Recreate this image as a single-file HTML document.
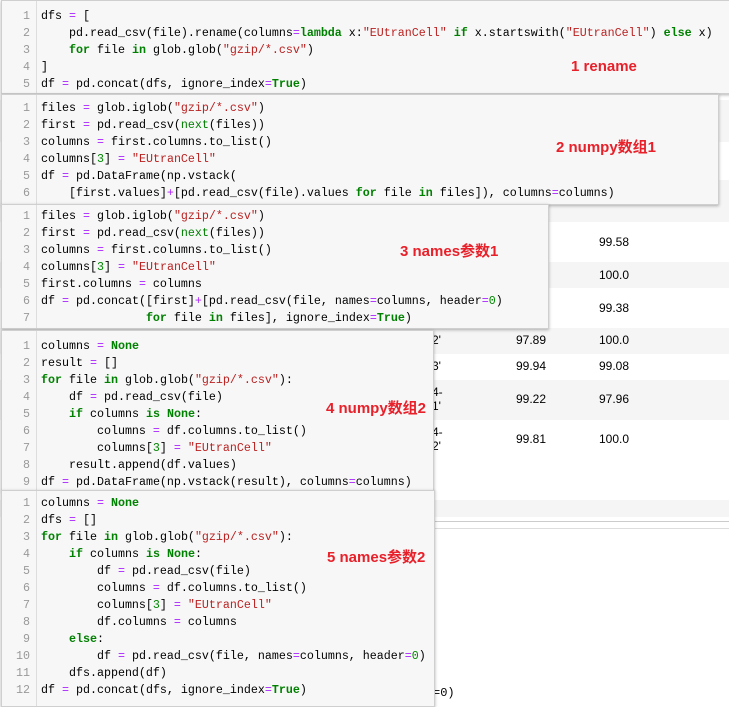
<!DOCTYPE html>
<html><head><meta charset="utf-8"><style>
body{margin:0;width:729px;height:700px;overflow:hidden;background:#fff;position:relative;font-family:"Liberation Mono",monospace;}
.band{position:absolute;left:0;right:0;background:#f5f5f5}
.num{position:absolute;font:12px "Liberation Sans",sans-serif;color:#000}
.cell{position:absolute;left:1px;background:#f7f7f7;border:1px solid #cfcfcf;box-shadow:0 1px 3px rgba(0,0,0,.3);overflow:hidden}
.cell .g{position:absolute;left:0;top:0;bottom:0;width:34px;border-right:1px solid #ddd}
.cell pre{margin:0;position:absolute;left:39px;font:11.67px/17px "Liberation Mono",monospace;color:#000;white-space:pre}
.cell .ln{position:absolute;left:0;width:28px;text-align:right;font:11.67px/17px "Liberation Mono",monospace;color:#999;white-space:pre}
.k{color:#008000;font-weight:bold}.o{color:#aa22ff}.s{color:#ba2121}.n{color:#080}.b{color:#008000}
.lab{position:absolute;color:#e8202a;font:bold 15px "Liberation Sans","Noto Sans CJK SC",sans-serif;white-space:nowrap}
</style></head><body>
<div class="band" style="top:100px;height:42px"></div>
<div class="band" style="top:180px;height:42px"></div>
<div class="band" style="top:262px;height:26px"></div>
<div class="band" style="top:328px;height:26px"></div>
<div class="band" style="top:380px;height:40px"></div>
<div class="band" style="top:500px;height:17px"></div>
<div style="position:absolute;left:433px;right:0;top:521px;height:1px;background:#ccc"></div>
<div style="position:absolute;left:433px;right:0;top:528px;height:1px;background:#ddd"></div>
<div class="num" style="left:599px;top:235px">99.58</div>
<div class="num" style="left:599px;top:268px">100.0</div>
<div class="num" style="left:599px;top:301px">99.38</div>
<div class="num" style="left:432px;top:333px">2'</div><div class="num" style="left:516px;top:333px">97.89</div><div class="num" style="left:599px;top:333px">100.0</div>
<div class="num" style="left:432px;top:359px">3'</div><div class="num" style="left:516px;top:359px">99.94</div><div class="num" style="left:599px;top:359px">99.08</div>
<div class="num" style="left:432px;top:385px;line-height:14px">4-<br>1'</div><div class="num" style="left:516px;top:392px">99.22</div><div class="num" style="left:599px;top:392px">97.96</div>
<div class="num" style="left:432px;top:425px;line-height:14px">4-<br>2'</div><div class="num" style="left:516px;top:432px">99.81</div><div class="num" style="left:599px;top:432px">100.0</div>
<div class="num" style="left:433px;top:686px;font-family:'Liberation Mono'">=0)</div>

<div class="cell" style="top:0;width:740px;height:92px"><div class="g"></div>
<div class="ln" style="top:7px">1
2
3
4
5</div>
<pre style="top:7px">dfs <span class="o">=</span> [
    pd.read_csv(file).rename(columns<span class="o">=</span><span class="k">lambda</span> x:<span class="s">"EUtranCell"</span> <span class="k">if</span> x.startswith(<span class="s">"EUtranCell"</span>) <span class="k">else</span> x)
    <span class="k">for</span> file <span class="k">in</span> glob.glob(<span class="s">"gzip/*.csv"</span>)
]
df <span class="o">=</span> pd.concat(dfs, ignore_index<span class="o">=</span><span class="k">True</span>)</pre></div>
<div class="lab" style="left:571px;top:58px">1 rename</div>

<div class="cell" style="top:94px;width:716px;height:109px"><div class="g"></div>
<div class="ln" style="top:5px">1
2
3
4
5
6</div>
<pre style="top:5px">files <span class="o">=</span> glob.iglob(<span class="s">"gzip/*.csv"</span>)
first <span class="o">=</span> pd.read_csv(<span class="b">next</span>(files))
columns <span class="o">=</span> first.columns.to_list()
columns[<span class="n">3</span>] <span class="o">=</span> <span class="s">"EUtranCell"</span>
df <span class="o">=</span> pd.DataFrame(np.vstack(
    [first.values]<span class="o">+</span>[pd.read_csv(file).values <span class="k">for</span> file <span class="k">in</span> files]), columns<span class="o">=</span>columns)</pre></div>
<div class="lab" style="left:556px;top:136px">2 numpy数组1</div>

<div class="cell" style="top:204px;width:546px;height:123px"><div class="g"></div>
<div class="ln" style="top:3px">1
2
3
4
5
6
7</div>
<pre style="top:3px">files <span class="o">=</span> glob.iglob(<span class="s">"gzip/*.csv"</span>)
first <span class="o">=</span> pd.read_csv(<span class="b">next</span>(files))
columns <span class="o">=</span> first.columns.to_list()
columns[<span class="n">3</span>] <span class="o">=</span> <span class="s">"EUtranCell"</span>
first.columns <span class="o">=</span> columns
df <span class="o">=</span> pd.concat([first]<span class="o">+</span>[pd.read_csv(file, names<span class="o">=</span>columns, header<span class="o">=</span><span class="n">0</span>)
               <span class="k">for</span> file <span class="k">in</span> files], ignore_index<span class="o">=</span><span class="k">True</span>)</pre></div>
<div class="lab" style="left:400px;top:240px">3 names参数1</div>

<div class="cell" style="top:330px;width:431px;height:159px"><div class="g"></div>
<div class="ln" style="top:7px">1
2
3
4
5
6
7
8
9</div>
<pre style="top:7px">columns <span class="o">=</span> <span class="k">None</span>
result <span class="o">=</span> []
<span class="k">for</span> file <span class="k">in</span> glob.glob(<span class="s">"gzip/*.csv"</span>):
    df <span class="o">=</span> pd.read_csv(file)
    <span class="k">if</span> columns <span class="k">is</span> <span class="k">None</span>:
        columns <span class="o">=</span> df.columns.to_list()
        columns[<span class="n">3</span>] <span class="o">=</span> <span class="s">"EUtranCell"</span>
    result.append(df.values)
df <span class="o">=</span> pd.DataFrame(np.vstack(result), columns<span class="o">=</span>columns)</pre></div>
<div class="lab" style="left:326px;top:397px">4 numpy数组2</div>

<div class="cell" style="top:490px;width:432px;height:215px"><div class="g"></div>
<div class="ln" style="top:4px">1
2
3
4
5
6
7
8
9
10
11
12</div>
<pre style="top:4px">columns <span class="o">=</span> <span class="k">None</span>
dfs <span class="o">=</span> []
<span class="k">for</span> file <span class="k">in</span> glob.glob(<span class="s">"gzip/*.csv"</span>):
    <span class="k">if</span> columns <span class="k">is</span> <span class="k">None</span>:
        df <span class="o">=</span> pd.read_csv(file)
        columns <span class="o">=</span> df.columns.to_list()
        columns[<span class="n">3</span>] <span class="o">=</span> <span class="s">"EUtranCell"</span>
        df.columns <span class="o">=</span> columns
    <span class="k">else</span>:
        df <span class="o">=</span> pd.read_csv(file, names<span class="o">=</span>columns, header<span class="o">=</span><span class="n">0</span>)
    dfs.append(df)
df <span class="o">=</span> pd.concat(dfs, ignore_index<span class="o">=</span><span class="k">True</span>)</pre></div>
<div class="lab" style="left:327px;top:546px">5 names参数2</div>
</body></html>
